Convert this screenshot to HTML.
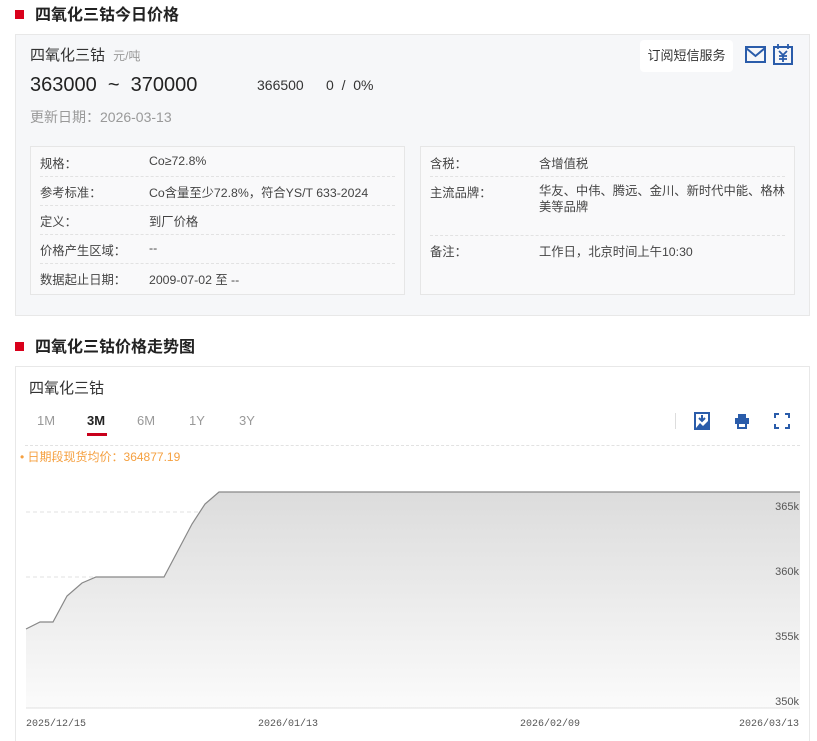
<!DOCTYPE html>
<html><head><meta charset="utf-8"><style>
*{margin:0;padding:0;box-sizing:border-box}
html,body{width:817px;height:741px;overflow:hidden}
body{background:#fff;font-family:"Liberation Sans","Noto Sans CJK SC",sans-serif;position:relative;color:#333}
.a{position:absolute;white-space:nowrap}
.h{font-size:16px;font-weight:bold;color:#222;line-height:20px}
.sq{position:absolute;width:9px;height:9px;background:#d9001b}
.t{font-size:12.3px;color:#444}
.dl{position:absolute;height:0;border-top:1px dashed #e2e2e2}
</style></head><body>
<div class="sq" style="left:15px;top:10px"></div>
<div class="a h" style="left:35px;top:6px">四氧化三钴今日价格</div>
<div class="a" style="left:15px;top:34px;width:795px;height:282px;background:#f6f7f9;border:1px solid #e8e8e8"></div>
<div class="a" style="left:30px;top:44px;font-size:15px;color:#333">四氧化三钴 <span style="font-size:12px;color:#999;margin-left:4px">元/吨</span></div>
<div class="a" style="left:30px;top:74px;font-size:20px;color:#222">363000 &nbsp;~&nbsp; 370000</div>
<div class="a" style="left:257px;top:77px;font-size:14px;color:#333">366500</div>
<div class="a" style="left:326px;top:77px;font-size:14px;color:#333">0 &nbsp;/&nbsp; 0%</div>
<div class="a" style="left:30px;top:107px;font-size:14px;color:#999">更新日期：2026-03-13</div>
<div class="a" style="left:640px;top:40px;width:93px;height:32px;background:#fff;border-radius:4px;font-size:13px;line-height:32px;text-align:center;color:#333">订阅短信服务</div>
<svg class="a" style="left:744px;top:44px" width="24" height="22" viewBox="0 0 24 22"><rect x="2" y="3" width="19" height="15" fill="none" stroke="#2a5caa" stroke-width="2"/><path d="M2 4 L11.5 12 L21 4" fill="none" stroke="#2a5caa" stroke-width="2"/></svg>
<svg class="a" style="left:772px;top:43px" width="22" height="24" viewBox="0 0 22 24"><rect x="2" y="4" width="18" height="17" fill="none" stroke="#2a5caa" stroke-width="2"/><path d="M6 1v5M16 1v5M7 8l4 4 4-4M11 12v7M7 13h8M7 16h8" fill="none" stroke="#2a5caa" stroke-width="1.8"/></svg>
<div class="a" style="left:30px;top:146px;width:375px;height:149px;background:#f9f9fa;border:1px solid #e6e6e6"></div>
<div class="a" style="left:420px;top:146px;width:375px;height:149px;background:#f9f9fa;border:1px solid #e6e6e6"></div>
<div class="a t" style="left:40px;top:154px">规格：</div><div class="a t" style="left:149px;top:154px">Co≥72.8%</div>
<div class="dl" style="left:40px;top:176px;width:355px"></div>
<div class="a t" style="left:40px;top:183px">参考标准：</div><div class="a t" style="left:149px;top:183px">Co含量至少72.8%，符合YS/T 633-2024</div>
<div class="dl" style="left:40px;top:205px;width:355px"></div>
<div class="a t" style="left:40px;top:212px">定义：</div><div class="a t" style="left:149px;top:212px">到厂价格</div>
<div class="dl" style="left:40px;top:234px;width:355px"></div>
<div class="a t" style="left:40px;top:241px">价格产生区域：</div><div class="a t" style="left:149px;top:241px">--</div>
<div class="dl" style="left:40px;top:263px;width:355px"></div>
<div class="a t" style="left:40px;top:270px">数据起止日期：</div><div class="a t" style="left:149px;top:270px">2009-07-02 至 --</div>
<div class="a t" style="left:430px;top:154px">含税：</div><div class="a t" style="left:539px;top:154px">含增值税</div>
<div class="dl" style="left:430px;top:176px;width:355px"></div>
<div class="a t" style="left:430px;top:183px">主流品牌：</div><div class="a t" style="left:539px;top:183px;line-height:16px">华友、中伟、腾远、金川、新时代中能、格林<br>美等品牌</div>
<div class="dl" style="left:430px;top:235px;width:355px"></div>
<div class="a t" style="left:430px;top:242px">备注：</div><div class="a t" style="left:539px;top:242px">工作日，北京时间上午10:30</div>

<div class="sq" style="left:15px;top:342px"></div>
<div class="a h" style="left:35px;top:338px">四氧化三钴价格走势图</div>
<div class="a" style="left:15px;top:366px;width:795px;height:375px;border:1px solid #e8e8e8;border-bottom:none"></div>
<div class="a" style="left:29px;top:377px;font-size:15px;color:#333">四氧化三钴</div>
<div class="a" style="left:37px;top:413px;font-size:13px;color:#999">1M</div>
<div class="a" style="left:87px;top:413px;font-size:13px;color:#222;font-weight:bold">3M</div>
<div class="a" style="left:87px;top:433px;width:20px;height:3px;background:#c8001b"></div>
<div class="a" style="left:137px;top:413px;font-size:13px;color:#999">6M</div>
<div class="a" style="left:189px;top:413px;font-size:13px;color:#999">1Y</div>
<div class="a" style="left:239px;top:413px;font-size:13px;color:#999">3Y</div>
<div class="a" style="left:675px;top:413px;width:1px;height:16px;background:#ddd"></div>
<svg class="a" style="left:694px;top:412px" width="16" height="18"><rect x="1" y="1" width="14" height="16" fill="none" stroke="#2a5caa" stroke-width="2"/><path d="M2 16 L6 11 L9 14 L14 9 V16Z" fill="#2a5caa"/><path d="M8 3v6M5 6l3 3 3-3" stroke="#2a5caa" stroke-width="2" fill="none"/></svg>
<svg class="a" style="left:734px;top:413px" width="16" height="16"><rect x="4" y="1" width="8" height="4" fill="#2a5caa"/><rect x="1" y="5" width="14" height="6" fill="#2a5caa"/><rect x="4" y="10" width="8" height="5" fill="#fff" stroke="#2a5caa" stroke-width="2"/></svg>
<svg class="a" style="left:774px;top:413px" width="16" height="16"><path d="M1 5V1h4M11 1h4v4M15 11v4h-4M5 15H1v-4" fill="none" stroke="#2a5caa" stroke-width="2"/></svg>
<div class="dl" style="left:25px;top:445px;width:775px"></div>
<div class="a" style="left:20px;top:448px;font-size:12px;color:#f5a040">• 日期段现货均价：364877.19</div>
<svg class="a" style="left:0;top:460px" width="817" height="281">
<defs><linearGradient id="g" x1="0" y1="0" x2="0" y2="1"><stop offset="0" stop-color="#dcdcdc"/><stop offset="1" stop-color="#fbfbfb"/></linearGradient></defs>
<line x1="26" y1="52" x2="800" y2="52" stroke="#e0e0e0" stroke-dasharray="4,3"/>
<line x1="26" y1="117" x2="800" y2="117" stroke="#e0e0e0" stroke-dasharray="4,3"/>
<line x1="26" y1="182" x2="800" y2="182" stroke="#e0e0e0" stroke-dasharray="4,3"/>
<path d="M26 169 L40 162 L53 162 L67 136 L82 123 L96 117 L164 117 L192 64 L205 44 L219 32 L800 32 L800 248 L26 248Z" fill="url(#g)"/>
<path d="M26 169 L40 162 L53 162 L67 136 L82 123 L96 117 L164 117 L192 64 L205 44 L219 32 L800 32" fill="none" stroke="#888" stroke-width="1.2"/>
<line x1="26" y1="248" x2="800" y2="248" stroke="#e0e0e0"/>
<g font-size="11" fill="#555" font-family="Liberation Sans,sans-serif" text-anchor="end">
<text x="799" y="50">365k</text><text x="799" y="115">360k</text><text x="799" y="180">355k</text><text x="799" y="245">350k</text></g>
<g font-size="10" fill="#555" font-family="Liberation Mono,monospace">
<text x="26" y="266">2025/12/15</text><text x="258" y="266">2026/01/13</text><text x="520" y="266">2026/02/09</text><text x="739" y="266">2026/03/13</text></g>
</svg>
</body></html>
